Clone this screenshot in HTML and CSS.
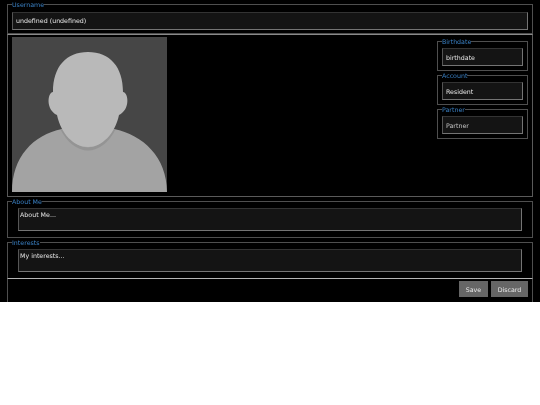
FILE: index.html
```html
<!DOCTYPE html>
<html lang="en">
<head>
<meta charset="utf-8">
<title>Profile</title>
<link rel="stylesheet" href="styles.css">
</head>
<body>
<div class="app">
  <fieldset class="box box-user">
    <legend>Username</legend>
    <div class="field field-user">undefined (undefined)</div>
  </fieldset>
  <div class="profile">
    <svg class="avatar" viewBox="0 0 155 155" aria-label="Profile picture">
      <rect width="155" height="155" fill="#464646"/>
      <path d="M0 155C0 120 21 98 50 92L76 100L102 92C131 98 155 120 155 155Z" fill="#a3a3a3"/>
      <path d="M50 92C56 104 66 112 76 112C86 112 96 104 102 92" fill="none" stroke="#949494" stroke-width="3"/>
      <path d="M41 55C41 30 54 15 76 15C98 15 111 30 111 55C117 56 118 73 107 78C103 97 90 110 76 110C62 110 49 97 45 78C34 73 35 56 41 55Z" fill="#b9b9b9"/>
    </svg>
    <div class="side">
      <fieldset class="box box-side">
        <legend>Birthdate</legend>
        <div class="field field-side">birthdate</div>
      </fieldset>
      <fieldset class="box box-side">
        <legend>Account</legend>
        <div class="field field-side">Resident</div>
      </fieldset>
      <fieldset class="box box-side">
        <legend>Partner</legend>
        <div class="field field-side muted">Partner</div>
      </fieldset>
    </div>
  </div>
  <fieldset class="box box-text">
    <legend>About Me</legend>
    <div class="field field-text">About Me...</div>
  </fieldset>
  <fieldset class="box box-text box-last">
    <legend>Interests</legend>
    <div class="field field-text">My interests...</div>
  </fieldset>
  <div class="actions">
    <button class="btn btn-save" type="button">Save</button>
    <button class="btn btn-discard" type="button">Discard</button>
  </div>
</div>
</body>
</html>
```
FILE: styles.css
```css
html, body {
  margin: 0;
  padding: 0;
  background: #fff;
}
.app {
  box-sizing: border-box;
  width: 540px;
  height: 302px;
  padding: 0 7px;
  background: #000;
  font-family: "DejaVu Sans", sans-serif;
  font-size: 6.3px;
  line-height: 9px;
  color: #e4e4e4;
  overflow: hidden;
  filter: blur(0.3px);
}
.box {
  box-sizing: border-box;
  margin: 0;
  padding: 0;
  min-width: 0;
  border: 1px solid #4f4f4f;
}
.box legend {
  margin-left: 4px;
  padding: 0;
  color: #3a80c4;
  height: 9px;
  line-height: 9px;
}
.box-user {
  height: 34px;
}
.field {
  box-sizing: border-box;
  background: #141414;
  border: 1px solid #747474;
  border-top-color: #333;
  border-left-color: #555;
}
.field-user {
  height: 18px;
  margin: 3px 4px 0;
  padding: 3px;
}
.profile {
  box-sizing: border-box;
  display: flex;
  justify-content: space-between;
  align-items: flex-start;
  height: 163px;
  padding: 2px 4px 0;
  border: 1px solid #5a5a5a;
  border-top-color: #8a8a8a;
}
.avatar {
  display: block;
  width: 155px;
  height: 155px;
}
.side {
  display: flex;
  flex-direction: column;
  width: 91px;
}
.box-side {
  height: 34px;
}
.field-side {
  height: 18px;
  margin: 2px 4px 0;
  padding: 4px 3px;
}
.muted {
  color: #c4c4c4;
}
.box-text {
  height: 41px;
}
.box-last {
  border-bottom-color: #b4b4b4;
}
.field-text {
  height: 23px;
  margin: 2px 10px 0;
  padding: 1px;
}
.actions {
  box-sizing: border-box;
  display: flex;
  justify-content: flex-end;
  gap: 3px;
  height: 23px;
  padding: 2px 4px 0;
  border-left: 1px solid #4f4f4f;
  border-right: 1px solid #4f4f4f;
}
.btn {
  margin: 0;
  padding: 0;
  height: 16px;
  border: 0;
  background: #666;
  color: #e8e8e8;
  font: inherit;
}
.btn-save {
  width: 29px;
}
.btn-discard {
  width: 37px;
}
```
